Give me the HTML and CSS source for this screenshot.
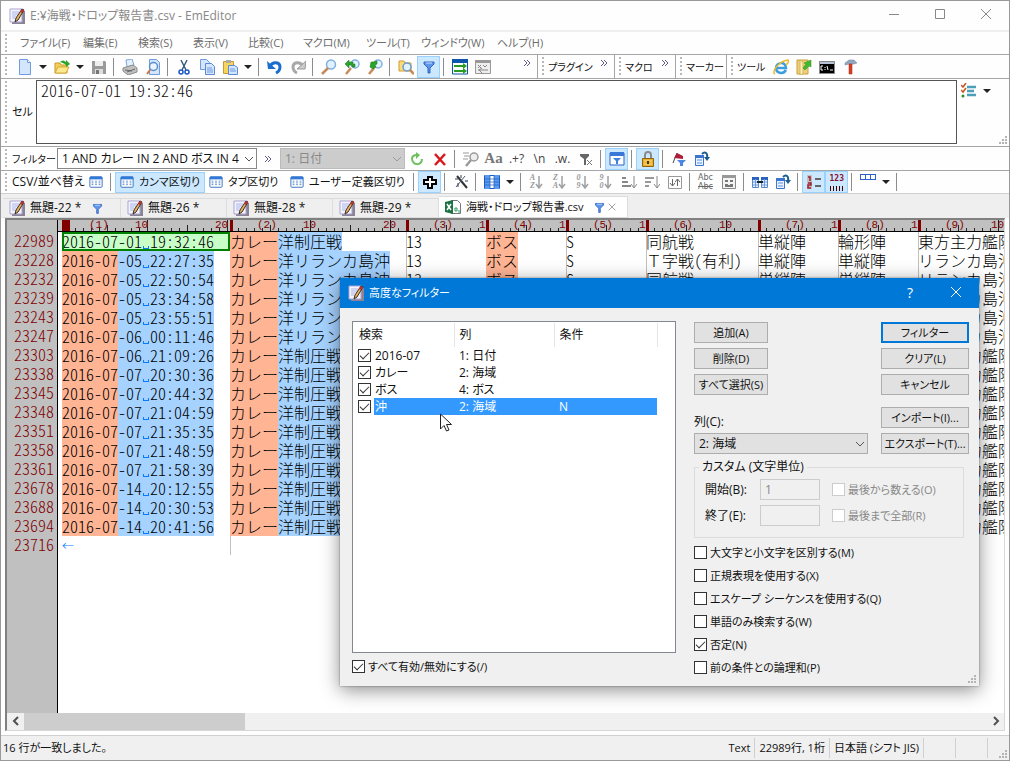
FILE: index.html
```
<!DOCTYPE html>
<html lang="ja">
<head>
  <meta charset="UTF-8">
  <meta name="viewport" content="width=device-width, initial-scale=1.0">
  <title>EmEditor</title>
  <link rel="stylesheet" href="styles.css">
</head>
<body>
  <!-- icon sheet -->
  <svg class="sheet" aria-hidden="true">
    <symbol id="i-app" viewBox="0 0 16 16"><path d="M3 3h13v13H3z" fill="#8a8494"/><path d="M1 1h12v13H1z" fill="#f4f4fc" stroke="#a9a5d6"/><path d="M3 4h7M3 6h6M3 8h4M3 10h3" stroke="#a9b4e8"/><path d="M13 1l2 1-6 10-3 2 1-4z" fill="#e8b45a" stroke="#3a2a2a"/><path d="M13 1l2 1-2 3-2-1z" fill="#c03030"/></symbol>
    <symbol id="i-new" viewBox="0 0 16 16"><path d="M2.500 .5h8l3 3v12h-11z" fill="#d3e6fb" stroke="#6f9be0"/><path d="M10.500 .5v3h3" fill="#fff" stroke="#6f9be0"/></symbol>
    <symbol id="i-open" viewBox="0 0 16 16"><path d="M1 14V4h5l1 2h6v8z" fill="#f3cf5a" stroke="#c99a2a"/><path d="M1 14l3-6h11l-3 6z" fill="#fde98e" stroke="#d3a93a"/><path d="M6 3c2-2 4-2 6 0V1l4 4-4 3V6c-2-2-4-2-6-3z" fill="#2aa52a"/></symbol>
    <symbol id="i-save" viewBox="0 0 16 16"><path d="M1 2h13l1 1v12H1z" fill="#9a9a9a"/><path d="M4 2h8v5H4z" fill="#eee"/><path d="M4 10h8v5H4z" fill="#ddd"/><path d="M5 11h3v4H5z" fill="#777"/></symbol>
    <symbol id="i-print" viewBox="0 0 16 16"><path d="M4 1l6-1 2 6-7 2z" fill="#e4effc" stroke="#7fa8dc"/><path d="M1 9l10-3 4 3v4l-9 3-5-4z" fill="#c0c0c0" stroke="#8a8a8a"/><path d="M3 11l7 1M5 13l8-3" stroke="#666"/></symbol>
    <symbol id="i-preview" viewBox="0 0 16 16"><path d="M4.500 .5h7l3 3v12h-10z" fill="#d3e6fb" stroke="#6f9be0"/><circle cx="8.500" cy="7.500" r="4" fill="#e9f6ff" stroke="#5f8fc8" stroke-width="1.500"/><path d="M5 11l-3 4" stroke="#cf7440" stroke-width="2"/></symbol>
    <symbol id="i-cut" viewBox="0 0 16 16"><path d="M5 1l5 10M11 1L6 11" stroke="#3a5a80" stroke-width="1.500"/><circle cx="5" cy="13" r="2" fill="none" stroke="#1c58c0" stroke-width="1.500"/><circle cx="11" cy="13" r="2" fill="none" stroke="#1c58c0" stroke-width="1.500"/></symbol>
    <symbol id="i-copy" viewBox="0 0 16 16"><path d="M1.500 .5h6l3 3v7h-9z" fill="#d3e6fb" stroke="#6f9be0"/><path d="M6.500 4.500h6l3 3v8h-9z" fill="#d3e6fb" stroke="#5c8ad8"/><path d="M8 9h5M8 11h6M8 13h6" stroke="#6f9be0"/></symbol>
    <symbol id="i-paste" viewBox="0 0 16 16"><path d="M1.500 2.500h10v12h-10z" fill="#f7d45c" stroke="#c39a35"/><path d="M4 1h5v3H4z" fill="#aaa"/><path d="M6.500 6.500h6l3 2v7h-9z" fill="#d3e6fb" stroke="#5c8ad8"/><path d="M8 10h5M8 12h6" stroke="#6f9be0"/></symbol>
    <symbol id="i-undo" viewBox="0 0 16 16"><path d="M3 7c3-5 10-4 10 1 0 3-2 5-4 6" fill="none" stroke="#1a6fce" stroke-width="3"/><path d="M0 2l1 8h8z" fill="#1a6fce"/></symbol>
    <symbol id="i-redo" viewBox="0 0 16 16"><path d="M13 7C10 2 3 3 3 8c0 3 2 5 4 6" fill="none" stroke="#a8a8a8" stroke-width="3"/><path d="M16 2l-1 8H7z" fill="#ccc" stroke="#999"/></symbol>
    <symbol id="i-find" viewBox="0 0 16 16"><circle cx="10" cy="5.500" r="4.500" fill="#dff2ff" stroke="#84aee0" stroke-width="1.500"/><path d="M7 9l-6 6" stroke="#c98a5a" stroke-width="2.500"/></symbol>
    <symbol id="i-next" viewBox="0 0 16 16"><circle cx="11" cy="5" r="4" fill="#dff2ff" stroke="#84aee0" stroke-width="1.500"/><path d="M7 9l-5 6" stroke="#c98a5a" stroke-width="2.500"/><path d="M1 5l4-4v2h4v2h2v3H8V6H5v3z" fill="#2aa52a" stroke="#157015" stroke-width=".5"/></symbol>
    <symbol id="i-prev" viewBox="0 0 16 16"><circle cx="11" cy="5" r="4" fill="#dff2ff" stroke="#84aee0" stroke-width="1.500"/><path d="M7 9l-5 6" stroke="#c98a5a" stroke-width="2.500"/><path d="M3 8l1-5h2l4-1v3L8 6l1 2-3 2z" fill="#2aa52a" stroke="#157015" stroke-width=".5"/></symbol>
    <symbol id="i-ffind" viewBox="0 0 16 16"><path d="M1 12V2h5l1 2h6v8z" fill="#fbdc78" stroke="#cf9d33"/><circle cx="9" cy="8" r="4" fill="#dff2ff" stroke="#6e9acb" stroke-width="1.500"/><path d="M12 11l4 4" stroke="#c98a5a" stroke-width="2.500"/></symbol>
    <symbol id="i-funnel" viewBox="0 0 16 16"><path d="M3 3h10v2l-4 4v5H7V9L3 5z" fill="#5f96ea" stroke="#2f66c4"/><path d="M5 4h6" stroke="#c9defb"/></symbol>
    <symbol id="i-win" viewBox="0 0 16 16"><path d="M.5 1h15v14H.5z" fill="#fff" stroke="#0c55a8"/><path d="M0 0h16v4H0z" fill="#0c55a8"/><path d="M2 7h11M2 12h11" stroke="#2a9a20" stroke-width="2"/><path d="M11 4l4 3-4 3zM11 9l4 3-4 3z" fill="#2a9a20"/></symbol>
    <symbol id="i-wrap" viewBox="0 0 16 16"><path d="M.5 1.500h15v13H.5z" fill="#eee" stroke="#999"/><path d="M0 1h16v3H0z" fill="#999"/><path d="M3 6l3 3M6 6L3 9M8 6l2 2 2-2M3 11h10M7 9l-3 2 3 3" fill="none" stroke="#888"/></symbol>
    <symbol id="i-ie" viewBox="0 0 16 16"><path d="M13 11c-3 5-10 3-10-2 0-6 10-7 10 0H4" fill="none" stroke="#3b9ee0" stroke-width="2.500"/><path d="M2 15C-2 13 6 2 15 1c2 1-1 4-2 5" fill="none" stroke="#eeb92c" stroke-width="1.500"/></symbol>
    <symbol id="i-fold" viewBox="0 0 16 16"><path d="M1 1h11v14H1z" fill="#eed079" stroke="#c8a13e"/><path d="M4 1l3 2v12l-3 1z" fill="#fbeeb5" stroke="#d5b45c"/><path d="M7 9l3-4-2-1 7-3v7l-2-1-4 4z" fill="#43b82e" stroke="#2c8f1c" stroke-width=".5"/></symbol>
    <symbol id="i-cmd" viewBox="0 0 16 16"><path d="M.5 2.500h15v12H.5z" fill="#000" stroke="#888"/><path d="M1 3h14v2H1z" fill="#b7c1d6"/><path d="M4 7H2v4h2M6 8v1M6 10v1M8 7l1 4M11 11h3" fill="none" stroke="#fff"/></symbol>
    <symbol id="i-hammer" viewBox="0 0 16 16"><path d="M3 4l4-3h5l3 3-3 1H7L3 6z" fill="#94a9bf" stroke="#6b8299" stroke-width=".5"/><path d="M7 5h3v10H7z" fill="#dc3c22" stroke="#a32a15" stroke-width=".5"/></symbol>
    <symbol id="i-list" viewBox="0 0 16 16"><path d="M0 2l2 2 3-4M0 7l2 2 3-4" fill="none" stroke="#c8501e" stroke-width="1.500"/><circle cx="2" cy="13" r="1.500" fill="#249224"/><path d="M6 4h9M6 8h7M6 12h9" stroke="#4d9fb8" stroke-width="2.500"/></symbol>
    <symbol id="i-refresh" viewBox="0 0 16 16"><path d="M3 7c0 8 10 8 10 1M8 4C5 4 3 5 3 8" fill="none" stroke="#6cc05c" stroke-width="2"/><path d="M7 1l4 3-4 4z" fill="#6cc05c"/></symbol>
    <symbol id="i-del" viewBox="0 0 16 16"><path d="M3 3l10 11M13 3L3 14" stroke="#d8191c" stroke-width="2.500"/></symbol>
    <symbol id="i-gfind" viewBox="0 0 16 16"><circle cx="11" cy="6" r="4" fill="#eee" stroke="#999" stroke-width="1.500"/><path d="M8 9l-5 6" stroke="#999" stroke-width="2.500"/><path d="M0 2h6M1 5h5M0 8h5" stroke="#999"/></symbol>
    <symbol id="i-funx" viewBox="0 0 16 16"><path d="M2 3h9v2L8 8v6H6V8L2 5z" fill="#666"/><path d="M9 9l5 5M14 9l-5 5" stroke="#777"/></symbol>
    <symbol id="i-fwin" viewBox="0 0 16 16"><path d="M1 2h14v12H1z" fill="#fff" stroke="#2a62c8"/><path d="M1 1h14v4H1z" fill="#3a78d8"/><path d="M4 7h8l-3 3v3H7v-3z" fill="#3e7fe0"/></symbol>
    <symbol id="i-lock" viewBox="0 0 16 16"><path d="M5 8V4c0-4 6-4 6 0v4" fill="none" stroke="#8c8c8c" stroke-width="2"/><path d="M2.500 7.500h11v8h-11z" fill="#e9b033" stroke="#8f6510"/><path d="M4 10h8M4 13h8" stroke="#f9dc83"/><path d="M8 10v3" stroke="#4b3505" stroke-width="2"/></symbol>
    <symbol id="i-flag" viewBox="0 0 16 16"><path d="M6 2L2 12" stroke="#444"/><path d="M6 2l6 3v3L3 7z" fill="#b01c3c"/><path d="M6 9h9l-3 3v3h-3v-3z" fill="#4c86e0"/></symbol>
    <symbol id="i-tblarrow" viewBox="0 0 16 16"><path d="M1.500 4.500h8v10h-8z" fill="#e9f2fd" stroke="#3c74d0"/><path d="M1 4h9v3H1z" fill="#3c74d0"/><path d="M3 9h5M3 12h5" stroke="#5a90e0"/><path d="M8 3c3-3 6-1 5 4" fill="none" stroke="#1b5c8e" stroke-width="2"/><path d="M10 6h6l-3 4z" fill="#1b5c8e"/></symbol>
    <symbol id="i-table" viewBox="0 0 16 16"><rect x="1" y="2" width="14" height="12" rx="1" fill="#fff" stroke="#2b62bd"/><path d="M1 2h14v3H1z" fill="#2f7ad8"/><path d="M3 7h2M7 7h2M11 7h2M3 9h2M7 9h2M11 9h2M3 11h2M7 11h2M11 11h2" stroke="#4c82c8"/></symbol>
    <symbol id="i-cross" viewBox="0 0 16 16"><path d="M6 3h4v3h4v4h-4v4H6v-4H2V6h4z" fill="#fff" stroke="#000" stroke-width="2"/></symbol>
    <symbol id="i-wand" viewBox="0 0 16 16"><path d="M4 2l10 12" stroke="#333" stroke-width="2"/><path d="M12 2L3 13" stroke="#557"/><path d="M2 5h3M8 1v3M12 7h3M5 9v4" stroke="#345"/></symbol>
    <symbol id="i-cols" viewBox="0 0 16 16"><path d="M.5 1.500h15v13H.5z" fill="#fff" stroke="#1d5fc0"/><path d="M1 1h5v14H1zM10 1h5v14h-5z" fill="#5a9af0"/><path d="M1 5h14M1 8h14M1 11h14M6 1v14M10 1v14" stroke="#1d5fc0" stroke-width=".7"/></symbol>
    <symbol id="i-down" viewBox="0 0 8 16"><path d="M4 2v11M1 10l3 4 3-4" fill="none" stroke="#a0a0a0" stroke-width="1.500"/></symbol>
    <symbol id="i-asc" viewBox="0 0 16 16"><path d="M1 4h4M1 8h6M1 12h9" stroke="#888" stroke-width="2"/><path d="M13 2v11M10 10l3 4 3-4" fill="none" stroke="#888"/></symbol>
    <symbol id="i-desc" viewBox="0 0 16 16"><path d="M1 4h9M1 8h6M1 12h4" stroke="#999" stroke-width="2"/><path d="M13 2v11M10 10l3 4 3-4" fill="none" stroke="#888"/></symbol>
    <symbol id="i-updown" viewBox="0 0 16 16"><path d="M1.500 2.500h13v12h-13z" fill="#fff" stroke="#999"/><path d="M5.500 5v7M3 9l2.500 3L8 9M10.500 12V5M8 8l2.500-3L13 8" fill="none" stroke="#666"/></symbol>
    <symbol id="i-abcwin" viewBox="0 0 16 16"><path d="M1.500 1.500h13v13h-13z" fill="#f4f4f4" stroke="#888"/><path d="M1 1h14v3H1z" fill="#999"/><path d="M4 7h3M9 7h3M4 11h3M9 11h3M4 12h8" stroke="#777" stroke-width="2"/></symbol>
    <symbol id="i-join" viewBox="0 0 16 16"><path d="M.5 3.500h6v10h-6zM9.500 3.500h6v10h-6z" fill="#e7f1fd" stroke="#5b86c8"/><path d="M0 3h7v3H0zM9 3h7v3H9z" fill="#2b62bd"/><path d="M1 8h5M1 11h5M10 8h5M10 11h5M3.500 5v8M12.500 5v8" stroke="#6c9be0"/><path d="M5 8h6" stroke="#123" stroke-width="2"/></symbol>
    <symbol id="i-lines" viewBox="0 0 16 16"><path d="M1 1h5v14H1z" fill="#c0c0c0"/><path d="M2 3h2v4M5 9H3M2 9h3v2H2v3h3" fill="none" stroke="#a02030" stroke-width="1.500"/><path d="M9 5h6M9 12h6" stroke="#666" stroke-width="2"/></symbol>
    <symbol id="i-grip" viewBox="0 0 8 8"><path d="M6 0h2v2H6zM3 3h2v2H3zM6 3h2v2H6zM0 6h2v2H0zM3 6h2v2H3zM6 6h2v2H6z" fill="#b4b4b4"/></symbol>
    <symbol id="i-min" viewBox="0 0 12 12"><path d="M1 6.500h10" stroke="#888"/></symbol>
    <symbol id="i-max" viewBox="0 0 12 12"><path d="M1.500 1.500h9v9h-9z" fill="none" stroke="#888"/></symbol>
    <symbol id="i-x" viewBox="0 0 12 12"><path d="M1 1l10 10M11 1L1 11" stroke="currentColor"/></symbol>
    <symbol id="i-chev" viewBox="0 0 10 6"><path d="M1 1l4 4 4-4" fill="none" stroke="currentColor"/></symbol>
    <symbol id="i-more" viewBox="0 0 8 6"><path d="M1 0l3 3-3 3M4 0l3 3-3 3" fill="none" stroke="#5d5d8c"/></symbol>
    <symbol id="i-excel" viewBox="0 0 16 16"><path d="M6.500 1.500h6l3 3v10h-9z" fill="#fff" stroke="#777"/><path d="M0 3l8-2v14l-8-2z" fill="#1d7245"/><path d="M2 5l4 6M6 5l-4 6" stroke="#fff" stroke-width="1.500"/><path d="M10 9h2v3h-2zM14 11v3" fill="none" stroke="#2f9a62"/></symbol>
  </svg>

  <div class="window">
    <header class="titlebar">
      <svg class="ic"><use href="#i-app"/></svg>
      <h1>E:¥海戦・ドロップ報告書.csv - EmEditor</h1>
      <div class="winbtns">
        <button aria-label="最小化"><svg><use href="#i-min"/></svg></button>
        <button aria-label="最大化"><svg><use href="#i-max"/></svg></button>
        <button aria-label="閉じる"><svg><use href="#i-x"/></svg></button>
      </div>
    </header>

    <nav class="menubar">
      <button class="wide">ファイル(F)</button>
      <button>編集(E)</button>
      <button>検索(S)</button>
      <button>表示(V)</button>
      <button>比較(C)</button>
      <button class="wide">マクロ(M)</button>
      <button>ツール(T)</button>
      <button class="wider">ウィンドウ(W)</button>
      <button>ヘルプ(H)</button>
    </nav>

    <div class="bars">
      <div class="bar main">
        <button class="tb" aria-label="新規"><svg class="ic"><use href="#i-new"/></svg></button><button class="dd" aria-label="新規メニュー"></button>
        <button class="tb" aria-label="開く"><svg class="ic"><use href="#i-open"/></svg></button><button class="dd" aria-label="開くメニュー"></button>
        <button class="tb" aria-label="保存"><svg class="ic"><use href="#i-save"/></svg></button>
        <i class="sep"></i>
        <button class="tb" aria-label="印刷"><svg class="ic"><use href="#i-print"/></svg></button>
        <button class="tb" aria-label="プレビュー"><svg class="ic"><use href="#i-preview"/></svg></button>
        <i class="sep"></i>
        <button class="tb" aria-label="切り取り"><svg class="ic"><use href="#i-cut"/></svg></button>
        <button class="tb" aria-label="コピー"><svg class="ic"><use href="#i-copy"/></svg></button>
        <button class="tb" aria-label="貼り付け"><svg class="ic"><use href="#i-paste"/></svg></button><button class="dd" aria-label="貼り付けメニュー"></button>
        <i class="sep"></i>
        <button class="tb" aria-label="元に戻す"><svg class="ic"><use href="#i-undo"/></svg></button>
        <button class="tb" aria-label="やり直し"><svg class="ic"><use href="#i-redo"/></svg></button>
        <i class="sep"></i>
        <button class="tb" aria-label="検索"><svg class="ic"><use href="#i-find"/></svg></button>
        <button class="tb" aria-label="次を検索"><svg class="ic"><use href="#i-next"/></svg></button>
        <button class="tb" aria-label="前を検索"><svg class="ic"><use href="#i-prev"/></svg></button>
        <i class="sep"></i>
        <button class="tb" aria-label="ファイルから検索"><svg class="ic"><use href="#i-ffind"/></svg></button>
        <button class="tb on" aria-label="フィルター"><svg class="ic"><use href="#i-funnel"/></svg></button>
        <i class="sep"></i>
        <button class="tb" aria-label="折り返さない"><svg class="ic"><use href="#i-win"/></svg></button>
        <button class="tb" aria-label="折り返し"><svg class="ic"><use href="#i-wrap"/></svg></button>
        <svg class="more"><use href="#i-more"/></svg>
      </div>
      <div class="bar plugin"><span>プラグイン</span><svg class="more"><use href="#i-more"/></svg></div>
      <div class="bar macro"><span>マクロ</span><svg class="more"><use href="#i-more"/></svg></div>
      <div class="bar marker"><span>マーカー</span></div>
      <div class="bar tools">
        <span>ツール</span>
        <button class="tb" aria-label="ブラウザー"><svg class="ic"><use href="#i-ie"/></svg></button>
        <button class="tb" aria-label="フォルダー"><svg class="ic"><use href="#i-fold"/></svg></button>
        <button class="tb" aria-label="コマンド"><svg class="ic"><use href="#i-cmd"/></svg></button>
        <button class="tb" aria-label="設定"><svg class="ic"><use href="#i-hammer"/></svg></button>
      </div>
    </div>

    <div class="cellbar">
      <label for="cell">セル</label>
      <textarea id="cell">2016-07-01 19:32:46</textarea>
      <div class="cellside">
        <div><button class="tb" aria-label="オプション"><svg class="ic"><use href="#i-list"/></svg></button><button class="dd" aria-label="オプションメニュー"></button></div>
        <svg class="grip"><use href="#i-grip"/></svg>
      </div>
    </div>

    <div class="bars filterbar">
      <label for="filter">フィルター</label>
      <div class="combo big"><select id="filter"><option>1 AND カレー IN 2 AND ボス IN 4</option></select><svg><use href="#i-chev"/></svg></div>
      <svg class="more"><use href="#i-more"/></svg>
      <div class="combo off"><select disabled aria-label="列"><option>1: 日付</option></select><svg><use href="#i-chev"/></svg></div>
      <button class="tb" aria-label="更新"><svg class="ic"><use href="#i-refresh"/></svg></button>
      <button class="tb" aria-label="中止"><svg class="ic"><use href="#i-del"/></svg></button>
      <i class="sep"></i>
      <button class="tb" aria-label="インクリメンタル"><svg class="ic"><use href="#i-gfind"/></svg></button>
      <button class="tb glyph serif">Aa</button>
      <button class="tb glyph">.+?</button>
      <button class="tb glyph">\n</button>
      <button class="tb glyph">.w.</button>
      <button class="tb" aria-label="否定"><svg class="ic"><use href="#i-funx"/></svg></button>
      <i class="sep"></i>
      <button class="tb on" aria-label="高度なフィルター"><svg class="ic"><use href="#i-fwin"/></svg></button>
      <i class="sep"></i>
      <button class="tb on" aria-label="ロック"><svg class="ic"><use href="#i-lock"/></svg></button>
      <i class="sep"></i>
      <button class="tb" aria-label="ブックマーク"><svg class="ic"><use href="#i-flag"/></svg></button>
      <button class="tb" aria-label="抽出"><svg class="ic"><use href="#i-tblarrow"/></svg></button>
    </div>

    <div class="bars csvbar">
      <span>CSV/並べ替え</span>
      <button class="tb" aria-label="通常"><svg class="ic sm"><use href="#i-table"/></svg></button>
      <i class="sep"></i>
      <button class="mode on"><svg class="ic sm"><use href="#i-table"/></svg>カンマ区切り</button>
      <button class="mode"><svg class="ic sm"><use href="#i-table"/></svg>タブ区切り</button>
      <button class="mode user"><svg class="ic sm"><use href="#i-table"/></svg>ユーザー定義区切り</button>
      <i class="sep"></i>
      <button class="tb on" aria-label="セル選択"><svg class="ic"><use href="#i-cross"/></svg></button>
      <i class="sep"></i>
      <button class="tb" aria-label="変換"><svg class="ic"><use href="#i-wand"/></svg></button>
      <i class="sep"></i>
      <button class="tb" aria-label="列の選択"><svg class="ic"><use href="#i-cols"/></svg></button><button class="dd" aria-label="列メニュー"></button>
      <i class="sep"></i>
      <button class="tb sort"><span>A<br>Z</span><svg><use href="#i-down"/></svg></button>
      <button class="tb sort"><span>Z<br>A</span><svg><use href="#i-down"/></svg></button>
      <button class="tb sort"><span>0<br>9</span><svg><use href="#i-down"/></svg></button>
      <button class="tb sort"><span>9<br>0</span><svg><use href="#i-down"/></svg></button>
      <button class="tb" aria-label="短い順"><svg class="ic"><use href="#i-asc"/></svg></button>
      <button class="tb" aria-label="長い順"><svg class="ic"><use href="#i-desc"/></svg></button>
      <button class="tb" aria-label="逆順"><svg class="ic"><use href="#i-updown"/></svg></button>
      <i class="sep"></i>
      <button class="tb abc"><span>Abc<br><s>Abc</s></span></button>
      <button class="tb" aria-label="重複行"><svg class="ic"><use href="#i-abcwin"/></svg></button>
      <i class="sep"></i>
      <button class="tb" aria-label="結合"><svg class="ic"><use href="#i-join"/></svg></button>
      <button class="tb" aria-label="列の操作"><svg class="ic"><use href="#i-tblarrow"/></svg></button>
      <i class="sep"></i>
      <button class="tb on" aria-label="行番号"><svg class="ic"><use href="#i-lines"/></svg></button>
      <button class="tb on num"><span>123</span></button>
      <i class="sep"></i>
      <button class="tb head" aria-label="見出し"><b></b></button><button class="dd" aria-label="見出しメニュー"></button>
      <i class="sep"></i>
    </div>

    <div class="tabs">
      <button><svg class="ic"><use href="#i-app"/></svg>無題-22 *<svg class="ic fun"><use href="#i-funnel"/></svg></button>
      <button><svg class="ic"><use href="#i-app"/></svg>無題-26 *</button>
      <button><svg class="ic"><use href="#i-app"/></svg>無題-28 *</button>
      <button><svg class="ic"><use href="#i-app"/></svg>無題-29 *</button>
      <button class="current"><svg class="ic"><use href="#i-excel"/></svg><span>海戦・ドロップ報告書.csv</span><svg class="ic fun"><use href="#i-funnel"/></svg><svg class="x"><use href="#i-x"/></svg></button>
    </div>

    <main class="editor">
      <div class="view">
        <div class="gutter" id="gutter"></div>
        <div class="sheetarea">
          <div class="ruler">
            <div class="w21 caret"><span class="n">(1)</span><span class="t10">10</span><span class="t20">20</span></div>
            <div class="w22"><span class="n">(2)</span><span class="t10">10</span><span class="t20">20</span></div>
            <div class="w10"><span class="n">(3)</span><span class="t10">1</span></div>
            <div class="w10"><span class="n">(4)</span><span class="t10">1</span></div>
            <div class="w10"><span class="n">(5)</span><span class="t10">1</span></div>
            <div class="w14"><span class="n">(6)</span><span class="t10">10</span></div>
            <div class="w10"><span class="n">(7)</span><span class="t10">1</span></div>
            <div class="w10"><span class="n">(8)</span><span class="t10">1</span></div>
            <div class="w22"><span class="n">(9)</span><span class="t10">10</span></div>
          </div>
          <table class="grid">
            <colgroup><col class="w21"><col class="w22"><col class="w10"><col class="w10"><col class="w10"><col class="w14"><col class="w10"><col class="w10"><col class="w22"></colgroup>
            <tbody id="rows"></tbody>
          </table>
        </div>
      </div>
      <div class="hscroll">
        <button aria-label="左"><svg viewBox="0 0 10 10"><path d="M7 1L3 5l4 4" fill="none" stroke="#505050" stroke-width="2"/></svg></button>
        <div class="track"><div class="thumb"></div></div>
        <button aria-label="右"><svg viewBox="0 0 10 10"><path d="M3 1l4 4-4 4" fill="none" stroke="#505050" stroke-width="2"/></svg></button>
      </div>
    </main>

    <footer class="status">
      <span class="msg">16 行が一致しました。</span>
      <span>Text</span>
      <span>22989行, 1桁</span>
      <span>日本語 (シフト JIS)</span>
      <span class="blank"></span>
      <span class="blank"></span>
      <svg class="grip"><use href="#i-grip"/></svg>
    </footer>

    <section class="dialog" role="dialog" aria-labelledby="dlgtitle">
      <header>
        <svg class="ic"><use href="#i-app"/></svg>
        <h2 id="dlgtitle">高度なフィルター</h2>
        <button aria-label="ヘルプ">?</button>
        <button aria-label="閉じる"><svg><use href="#i-x"/></svg></button>
      </header>
      <div class="body">
        <div class="left">
          <div class="list">
            <table>
              <thead><tr><th class="c1">検索</th><th class="c2">列</th><th class="c3">条件</th></tr></thead>
              <tbody>
                <tr><td><input type="checkbox" id="f1" checked><label for="f1">2016-07</label></td><td>1: 日付</td><td></td></tr>
                <tr><td><input type="checkbox" id="f2" checked><label for="f2">カレー</label></td><td>2: 海域</td><td></td></tr>
                <tr><td><input type="checkbox" id="f3" checked><label for="f3">ボス</label></td><td>4: ボス</td><td></td></tr>
                <tr class="sel"><td><input type="checkbox" id="f4" checked><label for="f4">沖</label></td><td>2: 海域</td><td>N</td></tr>
              </tbody>
            </table>
            <svg class="cursor" viewBox="0 0 12 19"><path d="M.5 1v15l3.500-3.500 2.500 5.500 2.500-1-2.500-5.500h5z" fill="#fff" stroke="#222"/></svg>
          </div>
          <label class="check"><input type="checkbox" checked>すべて有効/無効にする(/)</label>
        </div>
        <div class="right">
          <div class="top">
            <div class="edit">
              <button>追加(A)</button>
              <button>削除(D)</button>
              <button>すべて選択(S)</button>
              <label for="col">列(C):</label>
              <div class="combo"><select id="col"><option>2: 海域</option></select><svg><use href="#i-chev"/></svg></div>
            </div>
            <div class="act">
              <button class="default">フィルター</button>
              <button>クリア(L)</button>
              <button>キャンセル</button>
              <button class="apart">インポート(I)...</button>
              <button>エクスポート(T)...</button>
            </div>
          </div>
          <fieldset>
            <legend>カスタム (文字単位)</legend>
            <label for="from">開始(B):</label><input type="text" id="from" value="1" disabled>
            <label class="check dim"><input type="checkbox" disabled>最後から数える(O)</label>
            <label for="to">終了(E):</label><input type="text" id="to" disabled>
            <label class="check dim"><input type="checkbox" disabled>最後まで全部(R)</label>
          </fieldset>
          <div class="opts">
            <label class="check"><input type="checkbox">大文字と小文字を区別する(M)</label>
            <label class="check"><input type="checkbox">正規表現を使用する(X)</label>
            <label class="check"><input type="checkbox">エスケープ シーケンスを使用する(Q)</label>
            <label class="check"><input type="checkbox">単語のみ検索する(W)</label>
            <label class="check"><input type="checkbox" checked>否定(N)</label>
            <label class="check"><input type="checkbox">前の条件との論理和(P)</label>
          </div>
        </div>
      </div>
      <svg class="grip"><use href="#i-grip"/></svg>
    </section>
  </div>

  <script>
    // line number, day + time, sea area (0 = 制圧戦, 1 = リランカ島沖)
    const rows = [
      [22989, '-01', '19:32:46', 0],
      [23228, '-05', '22:27:35', 1],
      [23232, '-05', '22:50:54', 1],
      [23239, '-05', '23:34:58', 1],
      [23243, '-05', '23:55:51', 1],
      [23247, '-06', '00:11:46', 1],
      [23303, '-06', '21:09:26', 0],
      [23338, '-07', '20:30:36', 0],
      [23345, '-07', '20:44:32', 0],
      [23348, '-07', '21:04:59', 0],
      [23351, '-07', '21:35:35', 0],
      [23358, '-07', '21:48:59', 0],
      [23361, '-07', '21:58:39', 0],
      [23678, '-14', '20:12:55', 0],
      [23688, '-14', '20:30:53', 0],
      [23694, '-14', '20:41:56', 0]
    ];
    const areas = ['洋制圧戦', '洋リランカ島沖'];
    const fleets = ['東方主力艦隊', 'リランカ島沖'];
    let html = '';
    let nums = '';
    rows.forEach(([no, day, time, a], i) => {
      nums += `<div>${no}</div>`;
      html += `<tr><td${i ? '' : ' class="active"'}><mark class="or">2016-07</mark><mark class="bl">${day}<i> </i>${time}</mark></td>` +
        `<td><mark class="or">カレー</mark><mark class="bl">${areas[a]}</mark></td>` +
        `<td>13</td><td><mark class="or">ボス</mark></td><td>S</td>` +
        `<td>${i === 1 ? '<span class="full">Ｔ</span>字戦(有利)' : '同航戦'}</td><td>単縦陣</td><td>${i ? '単縦陣' : '輪形陣'}</td><td>${fleets[a]}</td></tr>`;
    });
    html += '<tr class="eof"><td>←</td><td colspan="8"></td></tr>';
    document.getElementById('rows').innerHTML = html;
    document.getElementById('gutter').innerHTML = nums + '<div>23716</div>';
  </script>
</body>
</html>
```
FILE: styles.css
```
* {
  box-sizing: border-box;
}

body {
  margin: 0;
  font-family: "Open Sans", "Noto Sans CJK JP", sans-serif;
  font-size: 12px;
  line-height: 16px;
  font-feature-settings: "palt";
  color: #111;
}

button, input, select, textarea {
  font: inherit;
  font-feature-settings: inherit;
  color: inherit;
  margin: 0;
}

button {
  padding: 0;
  border: 0;
  background: none;
  white-space: nowrap;
}

.sheet {
  display: none;
}

.ic {
  width: 16px;
  height: 16px;
  flex: none;
}

.ic.sm {
  width: 14px;
  height: 14px;
}

.window {
  position: relative;
  display: flex;
  flex-direction: column;
  height: 100vh;
  border: 1px solid #999;
  background: #fefefe;
  overflow: hidden;
}

/* title and menu */
.titlebar {
  display: flex;
  align-items: center;
  flex: none;
  height: 31px;
  padding-left: 8px;
  border-bottom: 2px solid #efefef;
  color: #888;
}

.titlebar h1 {
  flex: 1;
  margin: 0 0 0 5px;
  font-size: 12px;
  font-weight: normal;
}

.winbtns {
  display: flex;
}

.winbtns button {
  width: 46px;
  height: 29px;
}

.winbtns svg {
  width: 12px;
  height: 12px;
}

.menubar {
  display: flex;
  flex: none;
  height: 23px;
  padding-left: 19px;
  border-bottom: 1px solid #a6a6a6;
  color: #6d6d6d;
  font-size: 11px;
}

.menubar button {
  width: 55px;
  text-align: left;
}

.menubar button.wide {
  width: 63px;
}

.menubar button.wider {
  width: 76px;
}

.menubar, .bar, .cellbar, .filterbar, .csvbar {
  position: relative;
}

.menubar::before, .bar::before, .cellbar::before, .filterbar::before, .csvbar::before {
  content: "";
  position: absolute;
  left: 4px;
  top: 2px;
  bottom: 1px;
  width: 2px;
  background: repeating-linear-gradient(#b8b8b8 0 2px, transparent 2px 4px);
}

/* tool bars */
.bars {
  display: flex;
  align-items: center;
  flex: none;
  height: 24px;
  border-bottom: 1px solid #a6a6a6;
}

.bar {
  display: flex;
  align-items: center;
  height: 23px;
  padding-left: 12px;
  border-right: 1px solid #a6a6a6;
  font-size: 10px;
}

.bar span {
  flex: 1;
  white-space: nowrap;
}

.bar.main { width: 537px; }
.bar.plugin { width: 77px; }
.bar.macro { width: 61px; }
.bar.marker { width: 51px; }
.bar.tools { border-right: 0; }

.bar.tools span {
  margin-right: 4px;
}

.bar.plugin, .bar.macro, .bar.marker, .bar.tools {
  padding-left: 10px;
}

.tb {
  display: flex;
  align-items: center;
  justify-content: center;
  flex: none;
  width: 23px;
  height: 22px;
}

.on {
  background: #cce8ff;
  border: 1px solid #99d1ff;
}

.dd {
  flex: none;
  width: 14px;
  height: 22px;
}

.dd::after {
  content: "";
  display: block;
  margin: auto;
  width: 0;
  border: 4px solid transparent;
  border-top-color: #222;
  border-bottom: 0;
}

.sep {
  flex: none;
  width: 1px;
  height: 18px;
  margin: 0 4px 0 3px;
  background: #8c8c8c;
}

.more {
  flex: none;
  width: 8px;
  height: 6px;
  margin: 0 6px 8px auto;
}

.grip {
  width: 8px;
  height: 8px;
}

.cellbar {
  display: flex;
  flex: none;
  height: 68px;
  padding: 1px 2px 2px 11px;
  border-bottom: 1px solid #a6a6a6;
}

.cellbar label {
  width: 24px;
  align-self: center;
  font-size: 11px;
}

.cellbar textarea {
  flex: 1;
  min-width: 0;
  padding: 0 4px;
  border: 1px solid #555;
  border-radius: 0;
  resize: none;
  outline: 0;
  font: 16px/18px "Noto Sans CJK JP", monospace;
  font-weight: 300;
  font-feature-settings: "hwid";
}

.cellside {
  display: flex;
  flex-direction: column;
  align-items: flex-end;
  justify-content: space-between;
  width: 50px;
}

.cellside div {
  display: flex;
  align-self: flex-start;
}

.combo {
  position: relative;
  height: 21px;
}

.combo select {
  appearance: none;
  width: 100%;
  height: 100%;
  padding: 0 4px;
  border: 1px solid #888;
  border-radius: 0;
  background: #fff;
}

.combo svg {
  position: absolute;
  right: 3px;
  top: 8px;
  width: 10px;
  height: 6px;
  color: #555;
}

.filterbar > label {
  width: 56px;
  padding-left: 11px;
  font-size: 10px;
  white-space: nowrap;
}

.combo.big {
  width: 200px;
}

.combo.off {
  width: 125px;
}

.combo.off select {
  background: #ccc;
  border-color: #bbb;
  color: #888;
  opacity: 1;
}

.combo.off svg {
  color: #999;
}

.filterbar .more {
  margin: 0 8px 0 7px;
}

.glyph {
  font-size: 12px;
  color: #444;
}

.serif {
  font: bold 15px "Liberation Serif", serif;
  color: #777;
}

.csvbar {
  height: 23px;
  padding-left: 11px;
  border-bottom-color: #d0d0d0;
}

.csvbar > span {
  width: 72px;
  white-space: nowrap;
}

.mode {
  display: flex;
  align-items: center;
  gap: 5px;
  flex: none;
  width: 90px;
  height: 21px;
  padding-left: 4px;
  font-size: 11px;
}

.mode:not(.on) {
  width: 81px;
}

.mode.user:not(.on) {
  width: 124px;
}

.sort span {
  font: italic bold 8px/8px "Liberation Serif", serif;
  color: #999;
}

.sort svg {
  width: 8px;
  height: 16px;
}

.abc span {
  font: 8px/9px "DejaVu Sans", sans-serif;
  color: #666;
}

.num span {
  width: 14px;
  height: 17px;
  font: bold 8px/10px "DejaVu Sans Mono", monospace;
  color: #8a1030;
  background: repeating-linear-gradient(90deg, #400 0 1px, transparent 1px 3px) bottom / 100% 5px no-repeat;
}

.head b {
  width: 16px;
  height: 6px;
  margin-bottom: 10px;
  border: 1px solid #2a62c8;
  background: repeating-linear-gradient(90deg, #fff 0 4px, #2a62c8 4px 5px);
}

/* file tabs */
.tabs {
  display: flex;
  align-items: flex-end;
  flex: none;
  height: 24px;
  padding-left: 2px;
  background: #efefef;
}

.tabs button {
  display: flex;
  align-items: center;
  gap: 5px;
  width: 106px;
  height: 20px;
  padding-left: 6px;
  border: 1px solid #dcdcdc;
  border-left: 0;
}

.tabs button:first-child {
  width: 118px;
}

.tabs .current {
  width: 189px;
  height: 22px;
  background: #fff;
}

.tabs .current span {
  width: 122px;
  text-align: left;
  font-size: 11px;
}

.tabs .fun {
  width: 13px;
  height: 13px;
  margin-left: 5px;
}

.tabs .current .fun {
  margin: 0 -3px 0 0;
}

.tabs .x {
  width: 8px;
  height: 8px;
  color: #777;
}

/* editor */
.editor {
  display: flex;
  flex-direction: column;
  flex: 1;
  min-height: 0;
  margin: 0 4px 4px;
  border: 1px solid #d8d8d8;
  border-top: 2px solid #808080;
  border-left: 2px solid #808080;
}

.view {
  display: flex;
  flex: 1;
  min-height: 0;
  overflow: hidden;
  font: 16px/19px "Noto Sans CJK JP", monospace;
  font-weight: 300;
  font-feature-settings: "hwid";
  color: #000;
}

.gutter {
  flex: none;
  width: 51px;
  padding: 11px 3px 0 0;
  border-right: 1px solid #000;
  background: #c0c0c0;
  color: #800000;
  text-align: right;
}

.sheetarea {
  flex: 1;
  min-width: 0;
  overflow: hidden;
  background: #fff;
}

.ruler {
  display: flex;
  width: 1200px;
  height: 12px;
  padding-left: 4px;
  background: #c0c0c0;
  border-bottom: 1px solid #000;
  font: 11px/11px "Liberation Mono", monospace;
  font-feature-settings: normal;
  color: #800000;
}

.ruler div {
  position: relative;
  flex: none;
  border-left: 3px solid #800000;
  background:
    repeating-linear-gradient(90deg, transparent 0 77px, #222 77px 78px, transparent 78px 80px) bottom / 100% 11px no-repeat,
    repeating-linear-gradient(90deg, transparent 0 37px, #222 37px 38px, transparent 38px 40px) bottom / 100% 6px no-repeat,
    repeating-linear-gradient(90deg, transparent 0 5px, #222 5px 6px, transparent 6px 8px) bottom / 100% 3px no-repeat;
}

.ruler div.caret {
  border-left-width: 8px;
}

.ruler span {
  position: absolute;
  top: 0;
}

.ruler .n { left: 24px; }
.ruler .t10 { left: 70px; }
.ruler .t20 { left: 150px; }
.ruler .caret .n { left: 19px; }
.ruler .caret .t10 { left: 65px; }
.ruler .caret .t20 { left: 145px; }

.w21 { width: 168px; }
.w22 { width: 176px; }
.w14 { width: 112px; }
.w10 { width: 80px; }

.grid {
  width: 960px;
  margin-left: 4px;
  table-layout: fixed;
  border-collapse: collapse;
}

.grid td {
  height: 19px;
  padding: 0;
  white-space: pre;
  box-shadow: inset 1px 0 #c0c0c0;
}

.grid td:first-child {
  box-shadow: none;
}

.grid mark {
  display: inline-block;
  height: 19px;
  vertical-align: top;
  color: inherit;
}

.grid .or { background: #ffb494; }
.grid .bl { background: #a5d2ff; }

.grid mark i {
  display: inline-block;
  width: 6px;
  height: 3px;
  margin: 0 1px;
  border: 1px solid #0a7aff;
  border-top: 0;
  line-height: 0;
  overflow: hidden;
  vertical-align: -1px;
}

.grid td.active {
  background: #c8ffc8;
  outline: 2px solid #008000;
  outline-offset: -2px;
}

.grid .active mark {
  background: none;
}

.full {
  font-feature-settings: normal;
}

.eof td:first-child {
  color: #0a7aff;
  font-size: 12px;
}

.hscroll {
  display: flex;
  flex: none;
  height: 17px;
  background: #f0f0f0;
}

.hscroll button {
  width: 17px;
}

.hscroll svg {
  width: 10px;
  height: 10px;
}

.track {
  flex: 1;
}

.thumb {
  width: 23%;
  height: 100%;
  background: #cdcdcd;
}

/* status bar */
.status {
  display: flex;
  align-items: center;
  flex: none;
  height: 25px;
  padding: 0 2px;
  border-top: 1px solid #d0d0d0;
  background: #f0f0f0;
}

.status span {
  padding: 2px 4px;
  border-right: 1px solid #d0d0d0;
  font-size: 11px;
}

.status .msg {
  flex: 1;
  padding-left: 0;
  border: 0;
}

.status .blank {
  width: 32px;
  height: 20px;
}

.status .grip {
  margin: 12px 0 0 11px;
}

/* filter dialog */
.dialog {
  position: absolute;
  left: 339px;
  top: 277px;
  width: 639px;
  height: 408px;
  background: #f0f0f0;
  box-shadow: 0 4px 18px rgba(0, 0, 0, 0.45), 0 0 2px rgba(0, 0, 0, 0.4);
}

.dialog > header {
  display: flex;
  align-items: center;
  height: 30px;
  padding-left: 8px;
  background: #0078d7;
  color: #fff;
}

.dialog h2 {
  flex: 1;
  margin: 0 0 0 5px;
  font-size: 11px;
  font-weight: normal;
}

.dialog header button {
  width: 46px;
  height: 30px;
  font-size: 14px;
}

.dialog header button svg {
  width: 12px;
  height: 12px;
}

.dialog > .grip {
  position: absolute;
  right: 3px;
  bottom: 3px;
}

.body {
  display: flex;
  gap: 18px;
  padding: 13px 10px 0 12px;
}

.left {
  width: 324px;
}

.list {
  position: relative;
  height: 332px;
  padding: 1px;
  margin-bottom: 5px;
  border: 1px solid #828790;
  background: #fff;
}

.list table {
  width: 303px;
  table-layout: fixed;
  border-collapse: collapse;
}

.list th {
  height: 24px;
  padding: 0 5px;
  text-align: left;
  font-weight: normal;
  border-right: 1px solid #e5e5e5;
}

.list .c1 { width: 100px; }
.list .c2 { width: 100px; }
.list .c3 { width: 103px; }

.list td {
  height: 17px;
  padding: 0 5px;
  line-height: 17px;
  white-space: nowrap;
}

.list td:first-child {
  display: flex;
  align-items: center;
  gap: 4px;
  padding: 0 0 0 4px;
}

.list .sel {
  background: linear-gradient(90deg, #fff 20px, #3399ff 20px);
  color: #fff;
}

.cursor {
  position: absolute;
  left: 87px;
  top: 91px;
  width: 12px;
  height: 19px;
}

.dialog input[type="checkbox"] {
  appearance: none;
  flex: none;
  width: 13px;
  height: 13px;
  margin: 0;
  border: 1px solid #333;
  background: #fff;
}

.dialog input[type="checkbox"]:checked::after {
  content: "";
  display: block;
  width: 8px;
  height: 4px;
  margin: 2px 0 0 1px;
  border: solid #333;
  border-width: 0 0 1px 1px;
  transform: rotate(-45deg);
}

.dialog input[type="checkbox"]:disabled {
  border-color: #ccc;
}

.check {
  display: flex;
  align-items: center;
  gap: 3px;
  height: 17px;
  font-size: 11px;
  white-space: nowrap;
}

.right {
  flex: 1;
}

.top {
  display: flex;
  justify-content: space-between;
}

.edit, .act {
  display: flex;
  flex-direction: column;
  gap: 5px;
  padding-top: 1px;
}

.edit {
  width: 174px;
}

.act {
  width: 88px;
}

.edit button, .act button {
  width: 74px;
  height: 21px;
  border: 1px solid #adadad;
  background: #e1e1e1;
  font-size: 11px;
}

.act button {
  width: 88px;
}

.act button.default {
  border: 2px solid #0078d7;
}

.act .apart {
  margin-top: 7px;
}

.edit label {
  margin: 14px 0 -2px;
}

.edit .combo select {
  background: #e1e1e1;
  border-color: #adadad;
}

fieldset {
  display: grid;
  grid-template-columns: 55px 60px auto;
  align-content: start;
  gap: 5px 0;
  width: 270px;
  height: 78px;
  margin: 6px 0;
  padding: 5px 10px 0;
  border: 1px solid #dcdcdc;
}

legend {
  margin-left: -6px;
  padding: 0 3px;
  line-height: 14px;
}

fieldset > label {
  line-height: 21px;
}

fieldset input[type="text"] {
  width: 60px;
  height: 21px;
  padding: 0 4px;
  border: 1px solid #ccc;
  background: #f0f0f0;
  color: #888;
}

fieldset .check {
  height: 21px;
  margin-left: 12px;
}

.dim {
  color: #888;
}

.opts {
  display: flex;
  flex-direction: column;
  gap: 6px;
}
```
